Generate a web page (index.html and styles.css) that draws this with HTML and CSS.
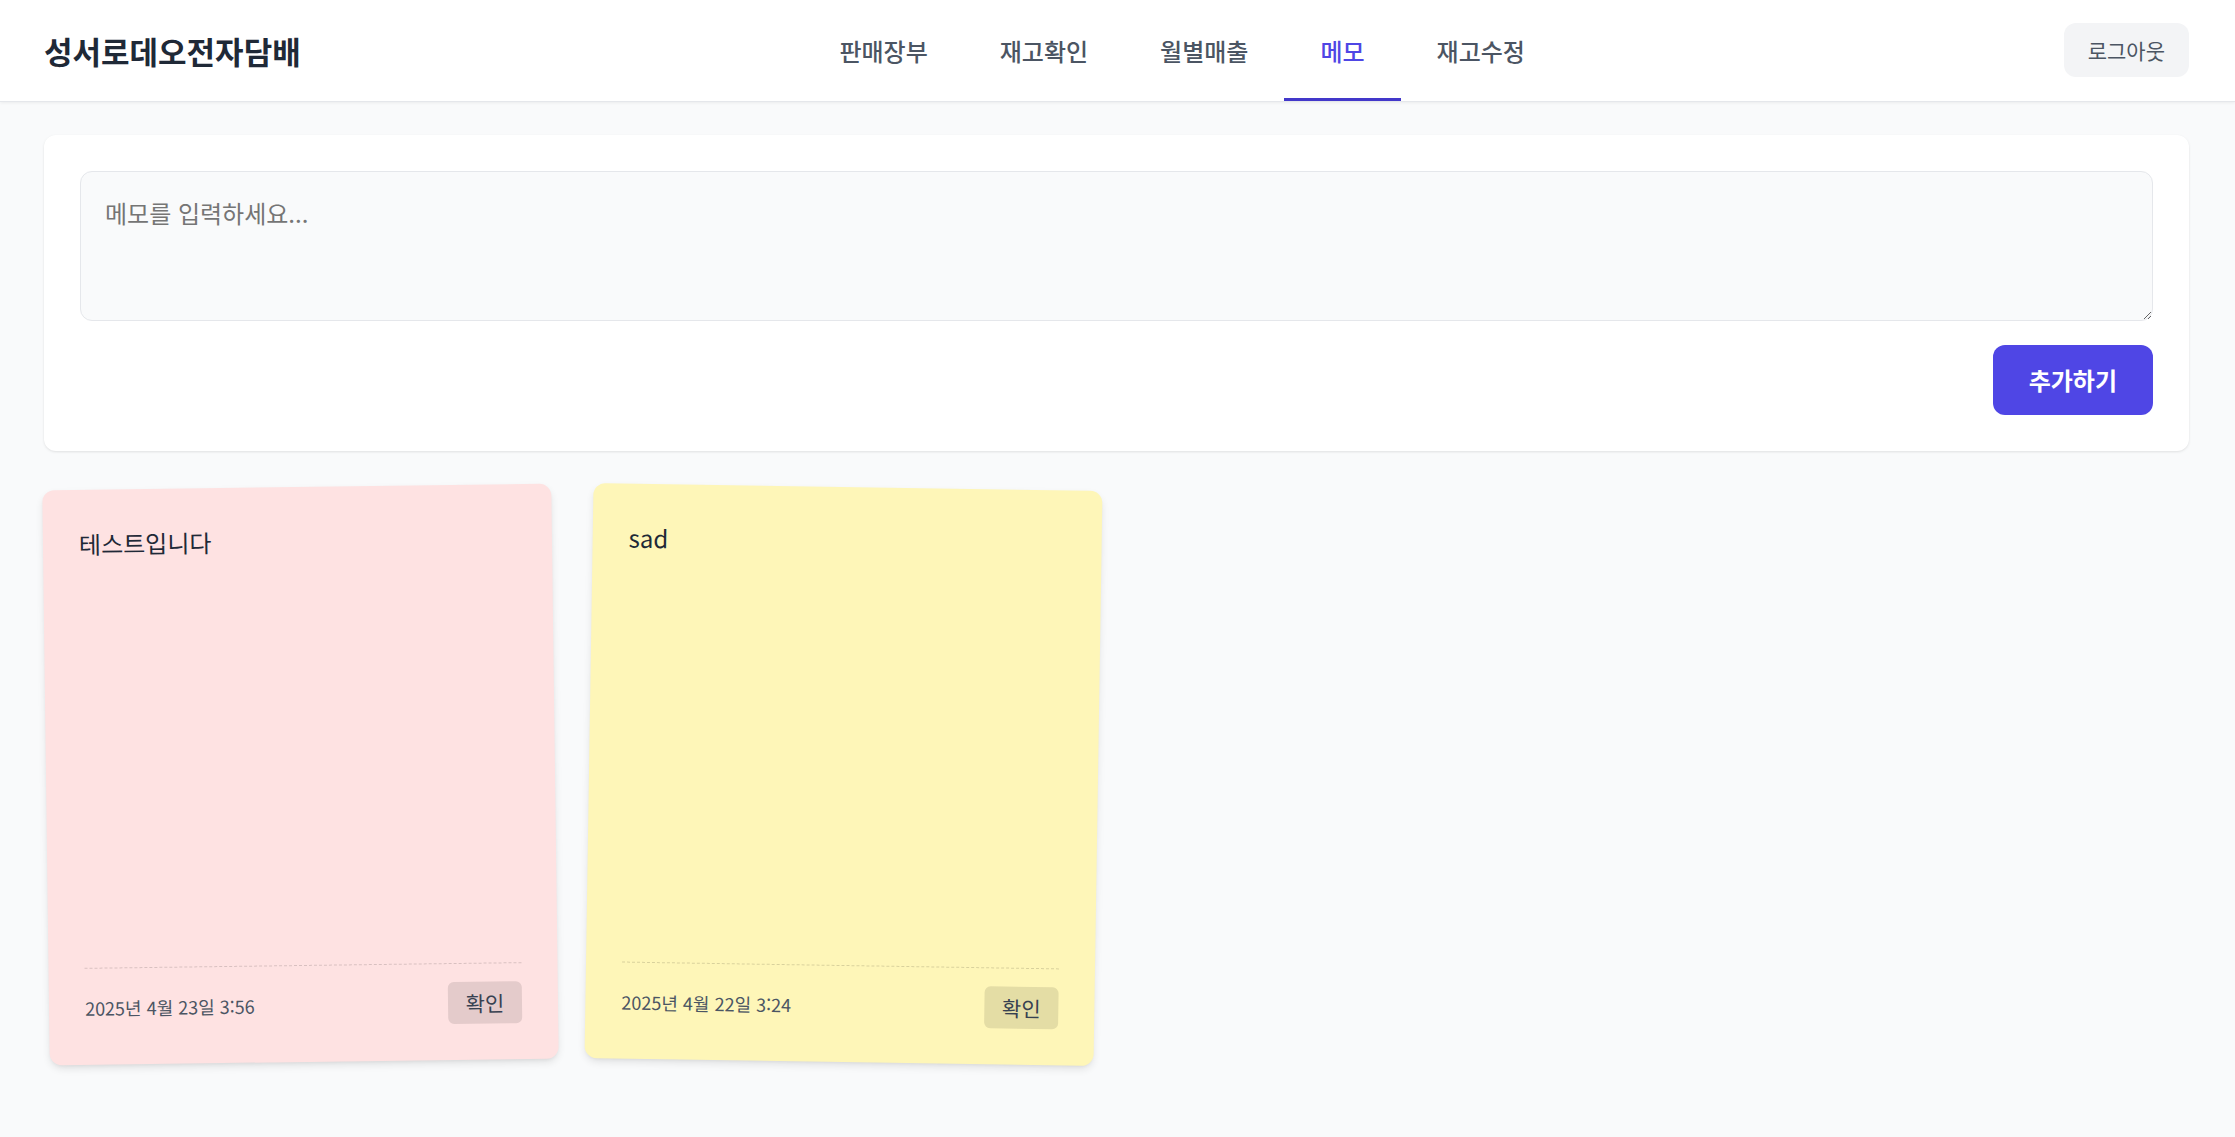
FILE: index.html
```html
<!DOCTYPE html>
<html lang="ko">
<head>
<meta charset="utf-8">
<title>메모</title>
<link rel="stylesheet" href="styles.css">
</head>
<body>
<header class="topbar">
  <div class="brand">성서로데오전자담배</div>
  <nav class="tabs">
    <a class="tab">판매장부</a>
    <a class="tab">재고확인</a>
    <a class="tab">월별매출</a>
    <a class="tab tab-active">메모</a>
    <a class="tab">재고수정</a>
  </nav>
  <button class="logout">로그아웃</button>
</header>
<main class="main">
  <section class="composer">
    <textarea class="memo-input" placeholder="메모를 입력하세요..."></textarea>
    <div class="composer-actions">
      <button class="add-btn">추가하기</button>
    </div>
  </section>
  <section class="notes">
    <article class="note note-pink tilt-left">
      <div class="note-body">테스트입니다</div>
      <div class="note-foot">
        <span class="note-date">2025년 4월 23일 3:56</span>
        <button class="note-btn">확인</button>
      </div>
    </article>
    <article class="note note-yellow tilt-right">
      <div class="note-body">sad</div>
      <div class="note-foot">
        <span class="note-date">2025년 4월 22일 3:24</span>
        <button class="note-btn">확인</button>
      </div>
    </article>
  </section>
</main>
</body>
</html>
```
FILE: styles.css
```css
* { box-sizing: border-box; }
html, body { margin: 0; padding: 0; }
body {
  background: #f9fafb;
  font-family: "Noto Sans CJK KR", "Noto Sans", sans-serif;
  color: #1f2937;
  min-height: 1137px;
}
.topbar {
  display: flex;
  justify-content: space-between;
  align-items: stretch;
  height: 102px;
  padding: 0 46px 0 44px;
  background: #ffffff;
  border-bottom: 1px solid #e5e7eb;
  box-shadow: 0 1px 3px rgba(0,0,0,0.06);
}
.brand {
  align-self: center;
  font-size: 31px;
  font-weight: 700;
  color: #1f2937;
  line-height: 45px;
}
.tabs { display: flex; align-items: stretch; }
.tab {
  display: flex;
  align-items: center;
  padding: 3px 36px 0;
  font-size: 24px;
  line-height: 36px;
  color: #4b5563;
  font-weight: 500;
  border-bottom: 3px solid transparent;
  cursor: pointer;
}
.tab-active {
  color: #4f46e5;
  border-bottom-color: #4338ca;
}
.logout {
  align-self: center;
  margin-top: -2px;
  font-family: inherit;
  font-size: 21px;
  line-height: 30px;
  padding: 12px 24px;
  border: 0;
  border-radius: 12px;
  background: #f3f4f6;
  color: #4b5563;
}
.main { padding: 33px 46px 0 44px; }
.composer {
  background: #ffffff;
  border-radius: 12px;
  padding: 36px;
  box-shadow: 0 1px 3px rgba(0,0,0,0.08), 0 1px 2px rgba(0,0,0,0.03);
}
.memo-input {
  display: block;
  width: 100%;
  height: 150px;
  padding: 23px 24px;
  border: 1px solid #e5e7eb;
  border-radius: 12px;
  background: #f9fafb;
  font-family: inherit;
  font-size: 24px;
  line-height: 36px;
  color: #1f2937;
  resize: vertical;
}
.memo-input::placeholder { color: #757575; }
.composer-actions {
  display: flex;
  justify-content: flex-end;
  margin-top: 24px;
}
.add-btn {
  font-family: inherit;
  font-size: 24px;
  line-height: 36px;
  font-weight: 700;
  color: #ffffff;
  background: #4f46e5;
  border: 0;
  border-radius: 12px;
  padding: 17px 36px;
}
.notes {
  display: grid;
  grid-template-columns: repeat(4, 1fr);
  gap: 36px;
  margin-top: 36px;
}
.note {
  height: 575px;
  border-radius: 12px;
  padding: 36px;
  display: flex;
  flex-direction: column;
  box-shadow: 0 4px 8px -1px rgba(0,0,0,0.11), 0 2px 4px -2px rgba(0,0,0,0.08);
}
.note-pink { background: #fee2e2; }
.note-yellow { background: #fef6b8; }
.tilt-left { transform: translateX(2px) rotate(-0.75deg); }
.tilt-right { transform: rotate(0.9deg); }
.note-body {
  flex: 1;
  font-size: 24px;
  line-height: 36px;
  color: #1f2937;
}
.note-foot {
  display: flex;
  justify-content: space-between;
  align-items: center;
  border-top: 1px dashed rgba(0,0,0,0.15);
  padding-top: 18px;
}
.note-date {
  font-size: 18px;
  line-height: 27px;
  color: #4b5563;
}
.note-btn {
  font-family: inherit;
  font-size: 21px;
  line-height: 30px;
  padding: 6px 18px;
  border: 0;
  border-radius: 6px;
  background: rgba(0,0,0,0.1);
  color: #374151;
}
```
